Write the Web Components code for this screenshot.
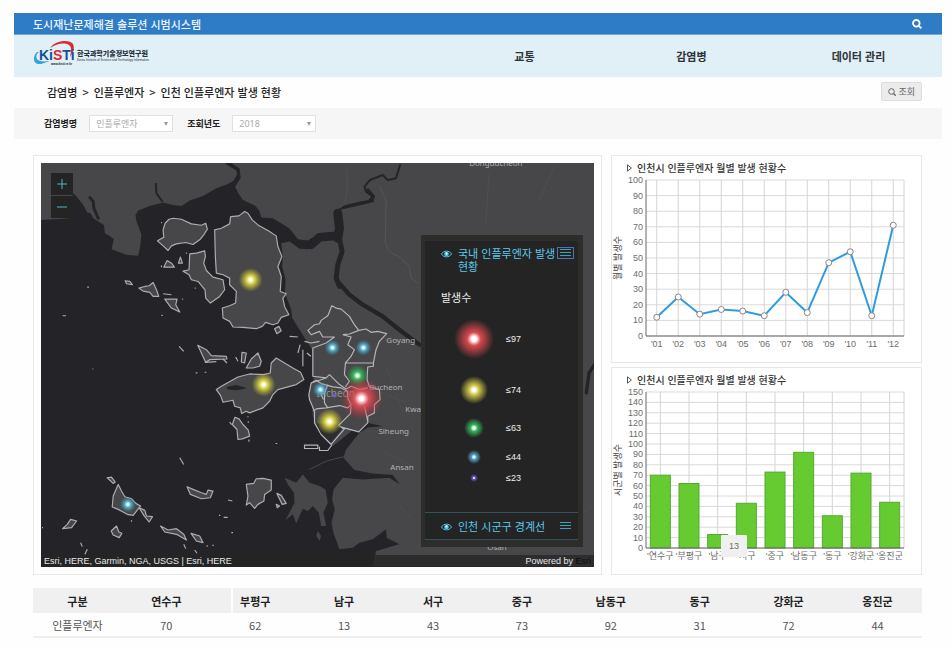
<!DOCTYPE html>
<html lang="ko">
<head>
<meta charset="utf-8">
<meta name="viewport" content="width=device-width, initial-scale=1">
<title>도시재난문제해결 솔루션 시범시스템</title>
<style>
  body { margin: 0; background: #fefefe; color: #333; font: 11px/16px "Noto Sans CJK KR", "Noto Sans", sans-serif; }
</style>
</head>
<body>
<dashboard-app></dashboard-app>
<script>
const define = (name, html, setup) => {
  const template = document.createElement('template');
  template.innerHTML = '<style>*{box-sizing:border-box}button,select{font:inherit;margin:0}</style>' + html;
  customElements.define(name, class extends HTMLElement {
    constructor() {
      super();
      this.attachShadow({ mode: 'open' }).append(template.content.cloneNode(true));
    }
    connectedCallback() { if (setup) setup(this, this.shadowRoot); }
  });
};

define('kisti-logo', `
<style>:host{display:block;width:122px} svg{display:block;width:100%} text{font-family:"Liberation Sans","Noto Sans CJK KR",sans-serif;font-weight:700}</style>
<svg viewBox="0 0 122 28" role="img" aria-label="KISTI 한국과학기술정보연구원">
  <path d="M4 12 C-1 17 0 25 8 24 L17 21 C10 22 5 21 4 19 C3 17 3 14 6 12 Z" fill="#34a3d8"/>
  <path d="M17 8 C22 0 37 -1 40 4 C42 8 40 13 37 17 C38 12 39 7 36 5 C31 2 23 4 17 8 Z" fill="#d92a35"/>
  <text x="6" y="20" font-size="14" fill="#15509a">Ki<tspan fill="#d92a35">S</tspan>Ti</text>
  <text x="18" y="25" font-size="3" fill="#222">www.kisti.re.kr</text>
  <text x="44" y="16" font-size="7" fill="#26323c" style="font-family:'Noto Sans CJK KR',sans-serif;font-weight:900">한국과학기술정보연구원</text>
  <text x="44" y="21" font-size="3" fill="#26323c" style="font-weight:400">Korea Institute of Science and Technology Information</text>
</svg>`);

define('app-header', `
<style>
  :host{display:block}
  .bar{display:flex;justify-content:space-between;align-items:center;height:22px;padding:0 20px 0 19px;background:#2e7cc6;border-bottom:1px solid #6fa8da;color:#eef6ff}
  h1{margin:0;font-size:11px;font-weight:500}
  button{display:flex;padding:0;border:0;background:none;color:#fff}
  .main{display:flex;justify-content:space-between;align-items:center;height:42px;background:#e1eff6}
  kisti-logo{margin:0 0 4px 19px}
  nav{display:grid;grid-template-columns:repeat(3,1fr);width:54%;text-align:center}
  a{color:#2d3338;text-decoration:none;font-weight:700}
</style>
<div class="bar"><h1>도시재난문제해결 솔루션 시범시스템</h1>
<button aria-label="검색"><svg width="10" height="10" viewBox="0 0 10 10" fill="none" stroke="currentColor" stroke-width="1.800"><circle cx="4.300" cy="4.300" r="3.300"/><path d="M6.500 6.500 9.300 9.300"/></svg></button></div>
<div class="main"><kisti-logo></kisti-logo><nav><a href="#traffic">교통</a><a href="#disease">감염병</a><a href="#data">데이터 관리</a></nav></div>`);

define('crumb-bar', `
<style>
  :host{display:flex;justify-content:space-between;align-items:center;height:31px;padding:0 20px 2px 33px}
  ol{display:flex;gap:5px;margin:0;padding:0;list-style:none;color:#222;font-weight:500}
  button{display:flex;align-items:center;gap:2px;height:19px;padding:0 6px;border:1px solid #ddd;border-radius:2px;background:#ececec;color:#666;font-size:9px}
</style>
<ol><li>감염병</li><li>&gt;</li><li>인플루엔자</li><li>&gt;</li><li>인천 인플루엔자 발생 현황</li></ol>
<button><svg width="8" height="8" viewBox="0 0 8 8" fill="none" stroke="currentColor"><circle cx="3.500" cy="3.500" r="2.800"/><path d="M5.500 5.500 7.700 7.700" stroke-width="1.400"/></svg>조회</button>`);

define('filter-bar', `
<style>
  :host{display:flex;align-items:center;gap:14px;height:31px;padding:0 30px;background:#f6f6f6;font-size:9px}
  .field{display:flex;align-items:center;gap:12px}
  label{font-weight:700;color:#222}
  .pick{display:inline-grid;width:84px}
  .pick>*{grid-area:1/1}
  select{appearance:none;width:100%;height:17px;padding:0 6px;border:1px solid #e0e0e0;border-radius:0;background:#fff;color:#aaa;font-family:"Noto Sans","Noto Sans CJK KR",sans-serif;line-height:14px}
  svg{place-self:center end;margin-right:5px;pointer-events:none}
</style>
<div class="field"><label for="disease">감염병명</label><span class="pick"><select id="disease"><option>인플루엔자</option></select><svg width="4" height="4" viewBox="0 0 4 4"><path d="M0 0h4L2 4z" fill="#999"/></svg></span></div>
<div class="field"><label for="year">조회년도</label><span class="pick"><select id="year"><option>2018</option></select><svg width="4" height="4" viewBox="0 0 4 4"><path d="M0 0h4L2 4z" fill="#999"/></svg></span></div>`);

define('glow-dot', `
<style>:host{display:block;border-radius:50%;width:var(--d);height:var(--d);background:radial-gradient(circle closest-side,#fff 0 12%,var(--c) 34%,transparent 100%)}</style>`);

define('eye-icon', `
<style>:host{display:block;width:11px} svg{display:block;width:100%}</style>
<svg viewBox="0 0 11 8"><path d="M.5 4C2.500 .2 8.500 .2 10.500 4 8.500 7.800 2.500 7.800 .5 4Z" fill="none" stroke="#4ec3e6"/><circle cx="5.500" cy="4" r="2.300" fill="#4ec3e6"/><circle cx="5.500" cy="3.500" r=".9" fill="#fff"/></svg>`);

define('map-legend', `
<style>
  :host{display:block;padding:6px 5px 7px 4px;background:#2d2d2c;color:#eee}
  section{background:#242424;padding:0 4px 0 16px}
  header{display:grid;grid-template-columns:17px 1fr 17px;color:#5cc9ea}
  h2{margin:0;font-size:11px;line-height:13px;font-weight:400;white-space:nowrap}
  h2 span{display:block}
  eye-icon{margin-top:3px}
  button{display:grid;place-items:center;width:17px;height:12px;padding:0;border:1px solid transparent;background:none;color:#419fb8}
  button.on{border-color:#4c72b8}
  .first{padding-top:6px;padding-bottom:25px}
  h3{margin:16px 0 4px;font-size:11px;line-height:16px;font-weight:400}
  ul{margin:0;padding:0;list-style:none;font:9px "Liberation Sans",sans-serif}
  li{display:grid;grid-template-columns:65px 1fr;align-items:center;height:var(--h)}
  glow-dot{justify-self:center}
  .second{padding-top:7px;height:28px;border-top:1px solid #31535d;border-bottom:1px solid #31535d}
</style>
<section class="first"><header><eye-icon></eye-icon><h2><span>국내 인플루엔자 발생</span><span>현황</span></h2><button class="on" aria-label="범례 메뉴"><svg width="11" height="8" stroke="currentColor"><path d="M0 .5h11M0 3.500h11M0 6.500h11"/></svg></button></header>
<h3>발생수</h3>
<ul>
  <li style="--h:60px"><glow-dot style="--d:40px;--c:#d8484e"></glow-dot>≤97</li>
  <li style="--h:42px"><glow-dot style="--d:28px;--c:#d0c84a"></glow-dot>≤74</li>
  <li style="--h:34px"><glow-dot style="--d:20px;--c:#35b65a"></glow-dot>≤63</li>
  <li style="--h:24px"><glow-dot style="--d:14px;--c:#4da9c8"></glow-dot>≤44</li>
  <li style="--h:18px"><glow-dot style="--d:8px;--c:#6b55d8"></glow-dot>≤23</li>
</ul></section>
<section class="second"><header><eye-icon></eye-icon><h2>인천 시군구 경계선</h2><button aria-label="경계선 메뉴"><svg width="11" height="8" stroke="currentColor"><path d="M0 .5h11M0 3.500h11M0 6.500h11"/></svg></button></header></section>`);

define('incheon-map', `
<style>
  :host{display:block;position:relative;background:#242428}
  svg{display:block;width:100%}
  .zoom{position:absolute;left:10px;top:10px;display:grid;gap:1px}
  .zoom button{display:grid;place-items:center;width:22px;height:22px;padding:0;border:0;background:#242424}
  .zoom svg{width:12px;height:12px}
  map-legend{position:absolute;right:11px;bottom:20px;width:162px}
  .credit{position:absolute;inset:auto 0 0 0;display:flex;justify-content:space-between;padding:0 3px;background:#242424b8;color:#e8e8e8;font:9px/12px "Liberation Sans",sans-serif}
  .credit a{color:#0c0c0c;text-decoration:none}
</style>
<svg viewBox="41 163 554 405" role="img" aria-label="인천 인플루엔자 발생 지도">
  <defs>
    <radialGradient id="gy"><stop offset=".1" stop-color="#fffff0"/><stop offset=".35" stop-color="#e0d84c" stop-opacity=".95"/><stop offset="1" stop-color="#c0b820" stop-opacity="0"/></radialGradient>
    <radialGradient id="gr"><stop offset=".1" stop-color="#fff"/><stop offset=".35" stop-color="#e8505a" stop-opacity=".9"/><stop offset="1" stop-color="#d02830" stop-opacity="0"/></radialGradient>
    <radialGradient id="gg"><stop offset=".1" stop-color="#f0fff0"/><stop offset=".35" stop-color="#3cc060" stop-opacity=".95"/><stop offset="1" stop-color="#209840" stop-opacity="0"/></radialGradient>
    <radialGradient id="gb"><stop offset=".1" stop-color="#f0ffff"/><stop offset=".4" stop-color="#58b8d4" stop-opacity=".9"/><stop offset="1" stop-color="#3090b0" stop-opacity="0"/></radialGradient>
  </defs>
  <rect x="41" y="163" width="554" height="405" fill="#242428"/>
  <g transform="translate(30 150) scale(.33333)" stroke-linejoin="round">
    <g fill="#47474a">
      <path d="M33 38H590L612 50 624 70 612 92 595 102 560 115 520 138 480 152 455 168 430 165 400 158 360 168 325 182 317 195 320 215 328 235 335 255 331 290 325 318 290 315 245 298 252 268 238 258 225 250 222 225 205 215 190 205 182 190 172 188 160 165 140 140 130 130 120 170 120 205 33 210Z"/>
      <path d="M605 38 627 58 630 85 614 105 626 130 640 150 678 168 690 185 695 203 730 205 780 236 805 268 835 272 850 262 850 290 835 298 810 297 780 275 755 280 760 320 758 350 768 390 766 430 785 480 788 505 810 540 835 580 848 600 852 700 845 740 850 800 870 850 910 890 960 850 990 820 1015 820 1060 830 1015 834 990 850 950 900 942 925 975 962 1030 972 1090 977 1112 1005 1080 985 1000 990 940 985 912 1020 908 1050 916 1080 906 1120 912 1150 930 1200 970 1195 990 1180 1030 1170 1070 1140 1072 1165 1110 1185 1040 1205 1030 1252H1700V38Z"/>
      <path d="M765 985 800 1000 820 975 840 1000 870 1010 888 1020 895 1060 882 1090 890 1130 875 1130 868 1090 850 1070 835 1085 820 1078 800 1122 790 1095 768 1112 785 1080 795 1060 793 1030 775 1005Z"/>
      <path d="M865 1145 875 1160 870 1175 860 1160Z"/>
    </g>
    <path d="M840 960 890 935 942 922" fill="none" stroke="#47474a" stroke-width="3"/>
    <g fill="none" stroke="#242428" stroke-linecap="round">
      <path d="M180 143 190 155 192 175 205 205" stroke-width="9"/>
      <path d="M378 102 380 130 397 154" stroke-width="6"/>
      <path d="M593 40 625 58 628 82 612 108" stroke-width="10"/>
      <path d="M845 285 870 262 920 258" stroke-width="26"/>
      <path d="M925 190 930 235 925 265" stroke-width="27"/>
      <path d="M920 185 950 168 995 158 1030 154 1030 140 1010 125 1005 110 1022 90 1060 75 1075 90 1100 85 1112 45" stroke-width="6"/>
      <path d="M945 172 1020 154 1032 140 1015 120" stroke-width="10"/>
      <path d="M930 265 938 305 925 345 920 385 930 410" stroke-width="15"/>
      <path d="M922 392 960 435 1000 465 1060 500 1110 540 1170 585" stroke-width="13"/>
      <path d="M1700 640 1680 670 1672 730" stroke-width="10"/>
      <path d="M905 1025 895 1000" stroke-width="5"/>
    </g>
    <g fill="none" stroke="#5c5c60" stroke-width="3">
      <path d="M1050 110 1070 150 1068 280 1080 305 1115 325 1140 350 1145 385 1165 400" opacity=".7"/>
      <path d="M950 45 955 110 945 160M1380 70 1370 220M1690 1070 1660 1090M1110 1070 1150 1110M1580 45 1530 150" opacity=".35"/>
      <path d="M990 550 1170 590M990 700 1130 760M1070 650 1120 790M1050 900 1170 960" opacity=".3"/>
    </g>
    <g fill="#47474a" stroke="#aeaeb2" stroke-width="3.500">
      <path d="M400 240 406 220 418 208 430 205 455 208 485 222 515 226 528 220 533 238 522 255 512 268 490 284 468 278 440 282 425 288 415 302 400 288 383 273 402 262Z"/>
      <path d="M480 312 500 310 525 303 527 320 522 340 530 362 550 382 580 390 585 420 570 440 542 460 528 445 526 420 505 395 485 390 478 375 460 364 478 360Z"/>
      <path d="M555 240 575 235 600 222 603 200 628 198 645 185 655 190 668 210 685 225 715 242 740 258 745 290 757 320 745 350 755 380 752 425 770 432 760 445 765 470 778 495 755 503 745 520 730 525 708 518 698 530 680 537 640 533 610 532 600 515 580 505 578 475 600 468 618 460 620 425 600 405 600 385 580 375 560 370 557 320Z"/>
      <path d="M327 415 345 410 358 408 370 398 380 420 387 440 370 440 360 428 340 424Z"/>
      <path d="M402 352 412 332 425 340 434 352Z"/><path d="M446 340 452 322 458 340Z"/>
      <path d="M405 448 442 448 438 465 450 487 425 475Z"/>
      <path d="M400 432 425 435 M286 393 300 395 308 405 290 402Z"/>
      <path d="M504 587 530 600 545 618 590 620 592 628 540 630 528 638Z"/>
      <path d="M635 637 637 608 650 610 645 640ZM650 655 665 628 685 610 695 635 690 650 670 655Z"/>
      <path d="M735 537 748 530 755 543 742 552ZM780 560 805 562"/>
      <path d="M560 720 575 710 602 695 625 682 660 673 702 675 722 670 725 640 740 625 765 640 790 655 813 668 823 690 800 705 775 712 745 720 730 735 720 755 700 775 660 790 650 785 636 792 632 775 615 770 610 752 580 758 573 738Z"/>
      <path d="M616 803 628 808 640 825 656 842 660 860 638 868 625 870 622 840 608 825Z"/>
      <path d="M265 1005 275 1025 285 1042 305 1048 318 1062 332 1070 320 1085 310 1098 292 1095 280 1088 265 1080 247 1073 250 1040Z"/>
      <path d="M232 985 245 983 256 998 250 1002ZM328 1075 345 1083 350 1100 368 1102 358 1118 342 1098ZM244 1145 260 1130 267 1148 276 1152 268 1165 250 1157Z"/>
      <path d="M472 1012 490 1020 515 1030 530 1035 535 1022 550 1025 542 1045 515 1048 482 1035Z"/>
      <path d="M650 1005 672 1002 680 988 700 987 725 992 725 1022 705 1035 703 1055 685 1065 675 1077 660 1060 650 1067 655 1040Z"/>
      <path d="M742 1032 755 1038 770 1062 758 1065ZM740 1065 750 1070 743 1075Z"/>
      <path d="M392 1130 415 1142 440 1138 462 1155 470 1172 440 1155 405 1148ZM484 1152 510 1160 520 1180 500 1175Z"/>
      <path d="M98 1138 112 1125 122 1110 140 1115 125 1135Z"/>
      <path d="M152 1180 157 1192M172 1200 165 1215M462 1185 468 1198M495 1202 502 1212M448 590 462 605M595 1052 608 1055M450 925 462 945M395 347V352M470 312V308M394 218H397M172 412H177M98 498H108M395 497H399M655 800V803M738 882H743M498 670H503M525 668H530M188 658H190M605 1150H610M548 1188H552M568 1098H572M582 1104H594M305 1113V1117M36 1135H39M495 415H498M457 448H460M530 1190H535M656 815V820M658 870V877M600 818 606 825M618 622 625 635M820 600V650M812 585 805 610M580 628 592 640M525 638 560 636"/>
    </g>
    <path d="M590 712 620 706 652 716 620 722 595 720Z" fill="#242428"/>
    <g transform="translate(810 450)" fill="#47474a" stroke="#b6b6ba" stroke-width="3.500">
      <path d="M25 92 45 75 60 72 65 62 85 48 97 18 110 25 125 28 150 50 165 75 178 92 200 88 215 98 235 95 262 102 240 125 230 150 222 190 222 200 205 202 203 240 210 262 240 270 242 300 225 315 225 340 205 350 205 370 178 397 115 380 135 388 95 435 65 405 45 370 45 335 30 300 28 285 35 250 80 235 40 230 40 145 80 130 105 112 70 112 60 95 35 105Z"/>
      <g fill="none"><path d="M130 105 155 112 145 135 165 150 155 170 138 190 135 225 150 245 138 262M130 105 150 103 178 92M138 190H222M80 235 90 225 120 255 140 268 155 260 180 270 205 265M35 250 50 242 65 252 100 262 125 265 145 275 145 295 155 315 145 325 120 318 80 325 50 328 42 335M75 280 75 310 85 325M85 255 75 280 65 285 72 300M195 320 205 365M155 320 153 342 115 380M15 437H55V447H15ZM60 442V453H85L97 437M22 160 34 170M15 125 35 130 60 125"/></g>
      <path d="M50 372H110L128 388 95 430 65 402Z" fill="#242428" stroke="none" opacity=".75"/>
    </g>
  </g>
  <g fill="#b2b2b5" font-family="Noto Sans, sans-serif" font-size="8">
    <text x="470" y="166">Dongducheon</text><text x="387" y="343">Goyang</text><text x="370" y="390">Bucheon</text><text x="317" y="397" font-size="10" opacity=".7">Incheon</text><text x="406" y="412">Kwa</text><text x="379" y="435">Siheung</text><text x="391" y="471">Ansan</text><text x="488" y="551">Osan</text>
  </g>
  <circle cx="251" cy="280" r="12" fill="url(#gy)"/><circle cx="264" cy="385" r="12" fill="url(#gy)"/><circle cx="330" cy="422" r="13" fill="url(#gy)"/>
  <circle cx="358" cy="376" r="11" fill="url(#gg)"/><circle cx="362" cy="399" r="21" fill="url(#gr)"/>
  <circle cx="333" cy="348" r="8" fill="url(#gb)"/><circle cx="364" cy="348" r="8" fill="url(#gb)"/><circle cx="321" cy="390" r="8" fill="url(#gb)"/><circle cx="128" cy="505" r="8" fill="url(#gb)"/>
  <circle cx="335" cy="396" r="2" fill="#6b62c8"/>
</svg>
<div class="zoom"><button aria-label="확대"><svg viewBox="0 0 12 12" stroke="#4fb6c4"><path d="M6 1v10M1 6h10"/></svg></button><button aria-label="축소"><svg viewBox="0 0 12 12" stroke="#4fb6c4"><path d="M1 6h10"/></svg></button></div>
<map-legend></map-legend>
<div class="credit"><span>Esri, HERE, Garmin, NGA, USGS | Esri, HERE</span><span>Powered by <a href="#esri">Esri</a></span></div>`);

define('chart-panel', `
<style>
  :host{display:block;border:1px solid #e8e8e8;background:#fff}
  h2{display:flex;align-items:center;gap:5px;margin:0;height:20px;padding:4px 15px 0;font-size:10px;line-height:16px;font-weight:500;color:#333}
</style>
<h2><svg width="5" height="8" viewBox="0 0 5 8" fill="none" stroke="#555"><path d="M.5 .8V7.200L4.400 4Z"/></svg><slot name="title"></slot></h2><slot></slot>`);

/* Shared plot area: 258 x 156 units, with its origin at (34, 160). */
const X0 = 34, Y0 = 160, W = 258, H = 156;
define('value-chart', `
<style>:host{display:block} svg{display:block;width:100%} text{font:9px "Liberation Sans","Noto Sans CJK KR",sans-serif;fill:#6c6c6c}</style><div></div>`,
(el, root) => {
  const values = el.getAttribute('values').split(',').map(Number);
  const names = el.getAttribute('names').split(',');
  const max = Number(el.getAttribute('max'));
  const step = W / values.length;
  const cx = i => X0 + step * (i + 0.5);
  const cy = v => Y0 - v / max * H;
  let s = '';
  for (let v = 0; v <= max; v += 10)
    s += `<path d="M${X0} ${cy(v)}H${X0 + W}" stroke="#dcd8d8"/><text x="${X0 - 3}" y="${cy(v) + 3}" text-anchor="end">${v}</text>`;
  names.forEach((n, i) => s += `<path d="M${cx(i)} ${Y0}V${Y0 - H}" stroke="#d6d3d3"/><text x="${cx(i)}" y="${Y0 + 11}" text-anchor="middle">'${n}</text>`);
  s += `<path d="M${X0 + W} ${Y0}V${Y0 - H}" stroke="#d6d3d3"/>`;
  if (el.getAttribute('kind') === 'bar') {
    values.forEach((v, i) => s += `<rect x="${cx(i) - 10}" y="${cy(v)}" width="20" height="${Y0 - cy(v)}" fill="#65cb31" stroke="#58a832"/>`);
  } else {
    s += `<polyline points="${values.map((v, i) => cx(i) + ',' + cy(v)).join(' ')}" fill="none" stroke="#309bdb" stroke-width="2"/>`;
    values.forEach((v, i) => s += `<circle cx="${cx(i)}" cy="${cy(v)}" r="3" fill="#fff" stroke="#888"/>`);
  }
  s += `<path d="M${X0} ${Y0 - H}V${Y0}H${X0 + W}" fill="none" stroke="#666"/>`;
  s += `<text transform="translate(9 ${Y0 - 78}) rotate(-90)" text-anchor="middle" style="fill:#444">${el.getAttribute('axis')}</text>`;
  const tip = el.getAttribute('tip');
  if (tip !== null) s += `<rect x="109" y="147" width="26" height="22" rx="1" fill="#f0f0f0"/><text x="122" y="161" text-anchor="middle">${values[tip]}</text>`;
  root.querySelector('div').innerHTML = `<svg viewBox="0 0 309 186">${s}</svg>`;
});

define('data-table', `
<style>
  :host{display:block}
  table{width:100%;table-layout:fixed;border-collapse:collapse;text-align:center}
  th,td{padding:0;font-size:11px}
  thead tr{background:#f0f0f0}
  thead th{height:25px;color:#222;font-weight:700}
  tbody tr>*{height:24px;border-bottom:2px solid #eee;color:#555;font-weight:400}
  thead th:nth-child(3){background:linear-gradient(#fefefe,#fefefe) 20px 0/2px 100% no-repeat}
</style>
<table>
<thead><tr><th scope="col">구분</th><th scope="col">연수구</th><th scope="col">부평구</th><th scope="col">남구</th><th scope="col">서구</th><th scope="col">중구</th><th scope="col">남동구</th><th scope="col">동구</th><th scope="col">강화군</th><th scope="col">옹진군</th></tr></thead>
<tbody><tr><th scope="row">인플루엔자</th><td>70</td><td>62</td><td>13</td><td>43</td><td>73</td><td>92</td><td>31</td><td>72</td><td>44</td></tr></tbody>
</table>`);

define('dashboard-app', `
<style>
  :host{display:block;padding:13px 10px 0 14px}
  main{padding:16px 20px 0 19px}
  .panels{display:grid;grid-template-columns:569fr 311fr;gap:9px;align-items:start}
  .map{padding:7px;border:1px solid #e8e8e8;background:#fff}
  .charts{display:grid;gap:4px}
  data-table{margin-top:13px}
</style>
<app-header></app-header>
<crumb-bar></crumb-bar>
<filter-bar></filter-bar>
<main>
  <div class="panels">
    <div class="map"><incheon-map></incheon-map></div>
    <div class="charts">
      <chart-panel><span slot="title">인천시 인플루엔자 월별 발생 현황수</span><value-chart kind="line" max="100" axis="월별 발생수" names="01,02,03,04,05,06,07,08,09,10,11,12" values="12,25,14,17,16,13,28,15,47,54,13,71"></value-chart></chart-panel>
      <chart-panel><span slot="title">인천시 인플루엔자 월별 발생 현황수</span><value-chart kind="bar" max="150" tip="2" axis="시군별 발생수" names="연수구,부평구,남구,서구,중구,남동구,동구,강화군,옹진군" values="70,62,13,43,73,92,31,72,44"></value-chart></chart-panel>
    </div>
  </div>
  <data-table></data-table>
</main>`);
</script>
</body>
</html>
